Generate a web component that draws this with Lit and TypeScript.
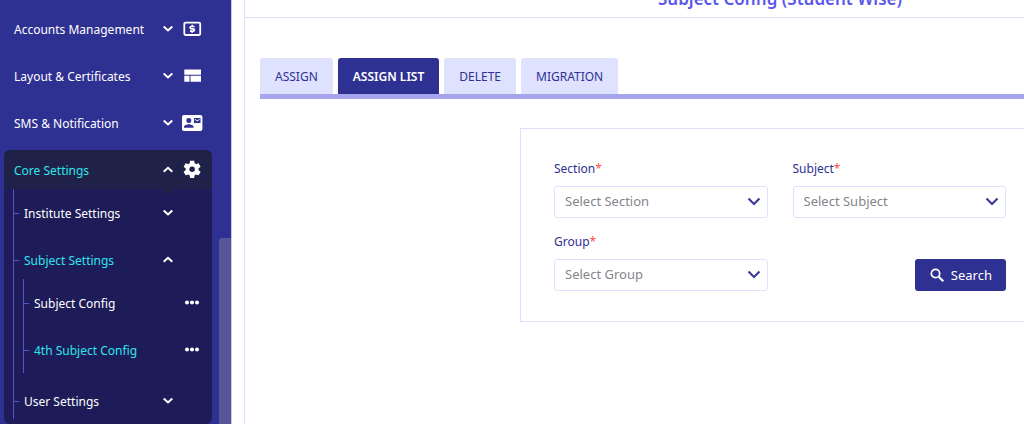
import { LitElement, html, css, svg, nothing } from "lit";
import { customElement, property } from "lit/decorators.js";

const icons: Record<string, unknown> = {
  money: svg`<rect x="2.300" y="3.600" width="15.900" height="12.400" rx="1.200" fill="none" stroke="currentColor" stroke-width="1.800"/>
    <path d="M12.500 7.500H9.400q-1.300 0-1.300 1.100t1.300 1.200h1.700q1.300 0 1.300 1.200t-1.300 1.200H8M10.200 5.800v1.600M10.200 12.200V13.800" fill="none" stroke="currentColor" stroke-width="1.700"/>`,
  layout: svg`<path d="M2.300 3.500H19v5.200H2.300zM2.300 9.700h5.200v6H2.300zM8.500 9.700H19v6H8.500z" fill="currentColor"/>`,
  contact: svg`<path fill-rule="evenodd" fill="currentColor" d="M2 2h16.400a2 2 0 0 1 2 2v12a2 2 0 0 1-2 2H2a2 2 0 0 1-2-2V4a2 2 0 0 1 2-2zm4.800 3a2.500 2.500 0 1 0 0 5 2.500 2.500 0 0 0 0-5zM2 14.700h9.600v-.8c0-1.700-3.200-2.600-4.800-2.600s-4.800.9-4.800 2.600zM12 5v5h6.500V5zm.9.8 2.350 1.700 2.350-1.700v.9l-2.350 1.700-2.350-1.700z"/>`,
  gear: svg`<path transform="translate(-.2 -1) scale(.86)" fill="currentColor" d="M19.430 12.980c.04-.32.07-.64.07-.98s-.03-.66-.07-.98l2.110-1.650c.19-.15.24-.42.12-.64l-2-3.460c-.12-.22-.39-.3-.61-.22l-2.490 1c-.52-.4-1.080-.73-1.690-.98l-.38-2.650C14.460 2.180 14.250 2 14 2h-4c-.25 0-.46.18-.49.42l-.38 2.650c-.61.25-1.170.59-1.690.98l-2.490-1c-.23-.09-.49 0-.61.22l-2 3.460c-.13.22-.07.49.12.64l2.110 1.650c-.04.32-.07.65-.07.98s.03.66.07.98l-2.110 1.650c-.19.15-.24.42-.12.64l2 3.460c.12.22.39.3.61.22l2.490-1c.52.4 1.080.73 1.690.98l.38 2.650c.03.24.24.42.49.42h4c.25 0 .46-.18.49-.42l.38-2.650c.61-.25 1.170-.59 1.690-.98l2.490 1c.23.09.49 0 .61-.22l2-3.460c.12-.22.07-.49-.12-.64zM12 15.200a3.200 3.200 0 1 1 0-6.400 3.200 3.200 0 0 1 0 6.400z"/>`,
  dots: svg`<g fill="currentColor"><circle cx="5" cy="9.500" r="2"/><circle cx="10" cy="9.500" r="2"/><circle cx="15" cy="9.500" r="2"/></g>`,
};

const chevron = (open = false) => html`<svg class="chev" viewBox="0 0 12 12" width="12" height="12" aria-hidden="true">
  <path d=${open ? "M1.700 7.800 6 3.800l4.300 4" : "M1.700 3.500 6 7.500l4.300-4"} fill="none" stroke="currentColor" stroke-width="2"/>
</svg>`;

@customElement("nav-row")
class NavRow extends LitElement {
  @property() label = "";
  @property() icon = "";
  @property() state = "";
  @property({ type: Boolean }) active = false;
  @property({ type: Boolean }) tick = false;

  static styles = css`
    :host { display: block; }
    .row {
      display: grid;
      grid-template-columns: 1fr 12px 20px;
      align-items: center;
      column-gap: 8px;
      width: 100%;
      height: var(--row-height, 47px);
      padding: 0;
      border: 0;
      background: none;
      color: #fff;
      font: inherit;
      text-align: left;
      text-decoration: none;
      cursor: pointer;
    }
    .row.active .label { color: #2ee6ea; }
    .label { display: flex; align-items: center; gap: 5px; padding-top: 2px; white-space: nowrap; }
    .tick { width: 5px; height: 1px; background: #5552cf; }
    svg { display: block; overflow: visible; }
    .icon { grid-column: 3; }
    .chev { grid-column: 2; }
  `;

  render() {
    const body = html`
      <span class="label">${this.tick ? html`<span class="tick"></span>` : nothing}${this.label}</span>
      ${this.state ? chevron(this.state === "open") : nothing}
      ${this.icon ? html`<svg class="icon" viewBox="0 0 20 20" width="20" height="20" aria-hidden="true">${icons[this.icon]}</svg>` : nothing}`;
    const cls = `row ${this.active ? "active" : ""}`;
    return this.state
      ? html`<button class=${cls} type="button" aria-expanded=${this.state === "open"}>${body}</button>`
      : html`<a class=${cls} href="#">${body}</a>`;
  }
}

@customElement("select-field")
class SelectField extends LitElement {
  @property() label = "";

  static styles = css`
    :host { display: block; }
    .field { display: grid; row-gap: 8px; }
    label { color: #2e3092; font-size: 12px; line-height: 18px; }
    .star { color: #ff4d4d; }
    .control { display: grid; align-items: center; }
    select {
      grid-area: 1 / 1;
      appearance: none;
      box-sizing: border-box;
      width: 100%;
      height: 32px;
      padding: 0 36px 2px 10px;
      border: 1px solid #dfe2ff;
      border-radius: 3px;
      background: #fff;
      color: #85858b;
      font: inherit;
    }
    svg { grid-area: 1 / 1; justify-self: end; margin-right: 7px; color: #3d3d9e; pointer-events: none; }
  `;

  render() {
    return html`<div class="field">
      <label for="box">${this.label}<span class="star">*</span></label>
      <div class="control">
        <select id="box" required><option>Select ${this.label}</option></select>
        <svg viewBox="0 0 14 14" width="14" height="14" aria-hidden="true">
          <path d="M1.500 3.500 7 9 12.500 3.500" fill="none" stroke="currentColor" stroke-width="2.200"/>
        </svg>
      </div>
    </div>`;
  }
}

@customElement("app-root")
class AppRoot extends LitElement {
  static styles = css`
    :host {
      display: grid;
      grid-template-columns: 232px 1fr;
      height: 100vh;
      overflow: hidden;
      background: #fff;
      font-family: "Segoe UI", "Noto Sans", sans-serif;
      font-size: 13px;
      line-height: 20px;
    }
    * { box-sizing: border-box; }
    .sidebar {
      display: grid;
      grid-template-columns: 1fr 12px;
      overflow: hidden;
      background: #2e3092;
      border-right: 1px solid #c9c9e6;
      font-size: 12px;
    }
    .menu { padding-top: 5px; }
    .menu > nav-row { margin: 0 17px 0 14px; }
    .panel { margin: 4px 7px 0 4px; border-radius: 6px; background: #1d1b58; overflow: hidden; }
    .head { --row-height: 39px; padding: 0 10px; background: #1f2149; }
    .notch {
      width: 14px;
      height: 6px;
      margin: 0 37px -6px auto;
      background: #1f2149;
      clip-path: polygon(0 0, 100% 0, 50% 100%);
    }
    ul { margin: 0; padding: 0; list-style: none; }
    .tree {
      margin: 0 10px 0 9px;
      padding-left: 1px;
      background: linear-gradient(#5552cf, #5552cf) 0 0 / 1px calc(100% - 5px) no-repeat;
    }
    .leafs { margin: -4px 0 4px 9px; border-left: 1px solid #5552cf; }
    .thumb { margin-top: 238px; border-radius: 3px 0 0 0; background: #555598; }
    .main { min-width: 1071px; margin-left: 12px; border-left: 1px solid #e4dcff; }
    .title {
      height: 60px;
      margin: -42px 0 0;
      padding-top: 29px;
      border-bottom: 1px solid #e4d9fb;
      color: #5b57ea;
      font-size: 17px;
      font-weight: 600;
      line-height: 24px;
      text-align: center;
    }
    .content { padding: 40px 15px; }
    .tabs { display: flex; gap: 5px; border-bottom: 5px solid #a4a5ea; }
    .tab {
      height: 36px;
      padding: 1px 15px 0;
      border: 0;
      border-radius: 3px 3px 0 0;
      background: #dfe2ff;
      color: #2e3092;
      font: inherit;
      font-size: 12px;
    }
    .tab.on { background: #2e3092; color: #fff; font-weight: 600; }
    .card {
      display: grid;
      grid-template-columns: 1fr 1fr;
      gap: 15px 25px;
      max-width: 520px;
      margin: 29px auto 0;
      padding: 31px 33px 30px;
      border: 1px solid #e4dcff;
    }
    .search {
      display: flex;
      align-items: center;
      gap: 6px;
      justify-self: end;
      align-self: end;
      height: 32px;
      padding: 0 14px;
      border: 0;
      border-radius: 3px;
      background: #2e3092;
      color: #fff;
      font: inherit;
    }
  `;

  render() {
    return html`
      <aside class="sidebar">
        <nav class="menu">
          <nav-row label="Accounts Management" state="closed" icon="money"></nav-row>
          <nav-row label="Layout &amp; Certificates" state="closed" icon="layout"></nav-row>
          <nav-row label="SMS &amp; Notification" state="closed" icon="contact"></nav-row>
          <div class="panel">
            <div class="head"><nav-row label="Core Settings" state="open" icon="gear" active></nav-row></div>
            <div class="notch"></div>
            <ul class="tree">
              <li><nav-row label="Institute Settings" state="closed" tick></nav-row></li>
              <li>
                <nav-row label="Subject Settings" state="open" tick active></nav-row>
                <ul class="leafs">
                  <li><nav-row label="Subject Config" icon="dots" tick></nav-row></li>
                  <li><nav-row label="4th Subject Config" icon="dots" tick active></nav-row></li>
                </ul>
              </li>
              <li><nav-row label="User Settings" state="closed" tick></nav-row></li>
            </ul>
          </div>
        </nav>
        <div class="thumb"></div>
      </aside>
      <main class="main">
        <h1 class="title">Subject Config (Student Wise)</h1>
        <div class="content">
          <div class="tabs" role="tablist">
            ${["ASSIGN", "ASSIGN LIST", "DELETE", "MIGRATION"].map(
              (t, i) => html`<button class="tab ${i === 1 ? "on" : ""}" type="button" role="tab" aria-selected=${i === 1}>${t}</button>`
            )}
          </div>
          <form class="card">
            <select-field label="Section"></select-field>
            <select-field label="Subject"></select-field>
            <select-field label="Group"></select-field>
            <button class="search" type="button">
              <svg viewBox="0 0 16 16" width="16" height="16" aria-hidden="true">
                <circle cx="6.500" cy="6.500" r="4.200" fill="none" stroke="currentColor" stroke-width="1.700"/>
                <path d="M9.700 9.700 14.300 14.300" stroke="currentColor" stroke-width="2.200"/>
              </svg>
              Search
            </button>
          </form>
        </div>
      </main>
    `;
  }
}
